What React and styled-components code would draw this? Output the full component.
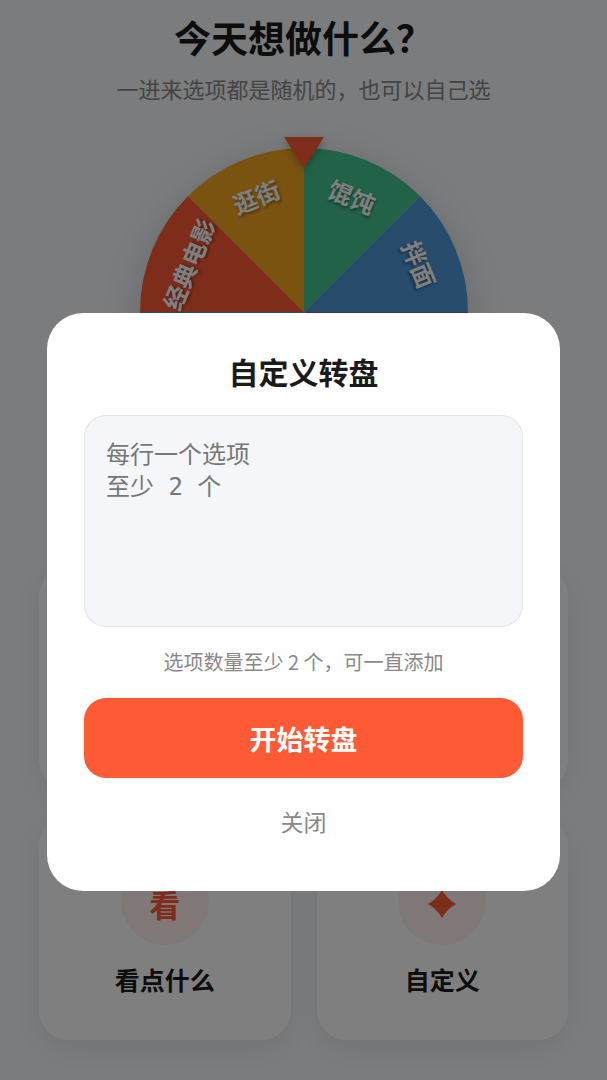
import React, { useState } from "react";
import styled, { createGlobalStyle } from "styled-components";

const App = () => {
  const [text, setText] = useState("");
  const [open, setOpen] = useState(true);

  return (
    <>
      <GlobalStyle />
      <Page>
        <Header>
          <h1>今天想做什么？</h1>
          <p>一进来选项都是随机的，也可以自己选</p>
        </Header>
        <Wheel />
        <Cards>
          <EmptyCard />
          <EmptyCard />
          <Card icon="看" title="看点什么" />
          <Card icon={<Spark />} title="自定义" onClick={() => setOpen(true)} />
        </Cards>
      </Page>
      {open && (
        <Overlay>
          <Dialog role="dialog" aria-labelledby="dialog-title">
            <h2 id="dialog-title">自定义转盘</h2>
            <Options
              aria-label="自定义转盘"
              placeholder={"每行一个选项\n至少 2 个"}
              value={text}
              onChange={(e) => setText(e.target.value)}
            />
            <Hint>选项数量至少 2 个，可一直添加</Hint>
            <StartButton type="button">开始转盘</StartButton>
            <CloseButton type="button" onClick={() => setOpen(false)}>
              关闭
            </CloseButton>
          </Dialog>
        </Overlay>
      )}
    </>
  );
};

//one slice every 45 degrees, starting from the top
const slices = [
  { label: "馄饨", color: "#45c492" },
  { label: "拌面", color: "#4f98d8" },
  { label: "", color: "#9b59b6" },
  { label: "", color: "#ff8fab" },
  { label: "", color: "#45c492" },
  { label: "", color: "#4f98d8" },
  { label: "经典电影", color: "#ff5a36" },
  { label: "逛街", color: "#f5a623" },
];

//point on the rim of the wheel
const rim = (deg) => {
  const rad = (deg * Math.PI) / 180;
  return `${164 * Math.sin(rad)} ${-164 * Math.cos(rad)}`;
};

const Wheel = () => (
  <WheelSvg viewBox="-200 -180 400 400" role="img" aria-label="转盘">
    <g className="disc">
      {slices.map((slice, i) => (
        <path
          key={i}
          fill={slice.color}
          d={`M0 0 L${rim(i * 45)} A164 164 0 0 1 ${rim(i * 45 + 45)} Z`}
        />
      ))}
    </g>
    {slices.map(
      (slice, i) =>
        slice.label && (
          <text key={i} y="-115" transform={`rotate(${i * 45 + 22.5})`}>
            {slice.label}
          </text>
        )
    )}
    <path className="pointer" d="M-20 -175 H20 L0 -144 Z" />
  </WheelSvg>
);

const Spark = () => (
  <svg width="28" height="28" viewBox="-14 -14 28 28" aria-hidden="true">
    <path
      fill="currentColor"
      d="M0 -14 Q5 -5 14 0 Q5 5 0 14 Q-5 5 -14 0 Q-5 -5 0 -14Z"
    />
  </svg>
);

//Card Component
const Card = ({ icon, title, onClick }) => {
  return (
    <CardStyle type="button" onClick={onClick}>
      <Badge>{icon}</Badge>
      {title}
    </CardStyle>
  );
};

const GlobalStyle = createGlobalStyle`
  * {
    box-sizing: border-box;
    margin: 0;
  }
  body {
    background: #f6f8fb;
    color: #1a1a1a;
    font-family: "Noto Sans CJK SC", sans-serif;
    overflow: hidden;
  }
  button, textarea {
    font-family: inherit;
    border: none;
  }
`;

const Page = styled.main`
  display: flex;
  flex-direction: column;
  align-items: center;
  height: 100vh;
  overflow: hidden;
`;

const Header = styled.header`
  text-align: center;
  padding-top: 10px;
  h1 {
    font-size: 37px;
    line-height: 54px;
  }
  p {
    color: #888;
    font-size: 22px;
    line-height: 32px;
    margin-top: 8px;
  }
`;

const WheelSvg = styled.svg`
  flex: none;
  width: 400px;
  height: 400px;
  margin-top: 28px;
  overflow: visible;
  .disc {
    filter: drop-shadow(0 8px 18px rgba(0, 0, 0, 0.16));
  }
  text {
    fill: white;
    font-size: 24px;
    font-weight: 700;
    text-anchor: middle;
    text-shadow: 1px 2px 3px rgba(0, 0, 0, 0.4);
  }
  .pointer {
    fill: #ff5a36;
    filter: drop-shadow(0 3px 4px rgba(0, 0, 0, 0.3));
  }
`;

const Cards = styled.section`
  display: grid;
  grid-template-columns: 1fr 1fr;
  gap: 26px;
  width: 100%;
  padding: 0 39px;
  margin-top: 34px;
`;

const EmptyCard = styled.div`
  height: 224px;
  border-radius: 30px;
  background: white;
  box-shadow: 0 8px 26px rgba(0, 0, 0, 0.07);
`;

const CardStyle = styled.button`
  display: flex;
  flex-direction: column;
  align-items: center;
  gap: 15px;
  height: 224px;
  padding-top: 41px;
  border-radius: 30px;
  background: white;
  color: #1a1a1a;
  box-shadow: 0 8px 26px rgba(0, 0, 0, 0.07);
  font-size: 25px;
  font-weight: 700;
  line-height: 38px;
`;

const Badge = styled.span`
  display: grid;
  place-items: center;
  width: 88px;
  height: 88px;
  padding-top: 5px;
  border-radius: 50%;
  background: #fff0ec;
  color: #ff5a36;
  font-size: 31px;
`;

const Overlay = styled.div`
  position: fixed;
  inset: 0;
  display: flex;
  align-items: center;
  justify-content: center;
  padding: 124px 47px 0;
  background: rgba(0, 0, 0, 0.5);
`;

const Dialog = styled.div`
  display: flex;
  flex-direction: column;
  align-items: center;
  width: 100%;
  padding: 36px 37px;
  border-radius: 36px;
  background: white;
  h2 {
    font-size: 30px;
    line-height: 44px;
  }
`;

const Options = styled.textarea`
  width: 100%;
  height: 212px;
  margin-top: 22px;
  padding: 24px 22px;
  border-radius: 22px;
  background: #f4f6fa;
  box-shadow: inset 0 0 0 1px #e4e5e7;
  color: #1a1a1a;
  font-family: "DejaVu Sans Mono", "Noto Sans CJK SC", monospace;
  font-size: 24px;
  line-height: 32px;
  resize: none;
  outline: none;
  &::placeholder {
    color: #777;
  }
`;

const Hint = styled.p`
  margin-top: 20px;
  color: #888;
  font-size: 20px;
  line-height: 30px;
`;

const StartButton = styled.button`
  width: 100%;
  height: 80px;
  margin-top: 21px;
  border-radius: 22px;
  background: #ff5a36;
  color: white;
  font-size: 27px;
  font-weight: 700;
`;

const CloseButton = styled.button`
  width: 100%;
  height: 69px;
  margin-top: 8px;
  background: none;
  color: #888;
  font-size: 23px;
`;

export default App;
